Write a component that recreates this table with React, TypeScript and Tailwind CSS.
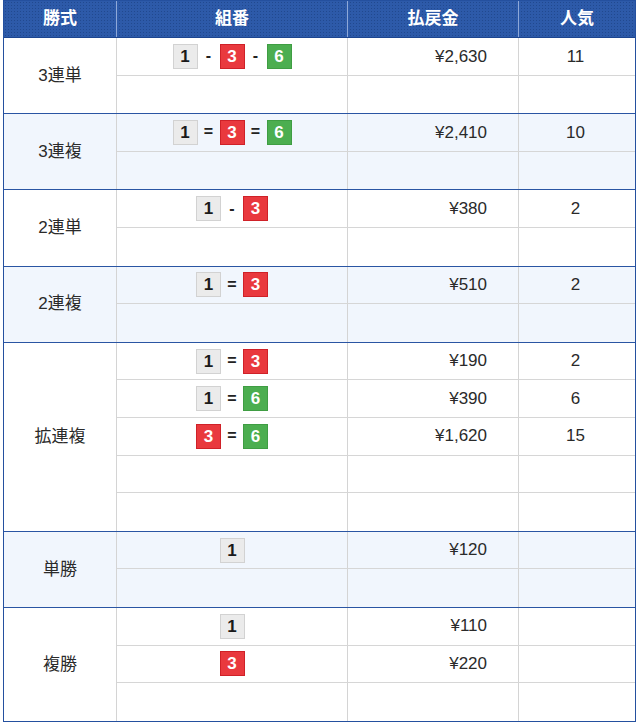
const font = { fontFamily: '"Liberation Sans", "Noto Sans CJK JP", sans-serif' };

type Pick = { nums: number[]; sep: string; pay: string; pop: string };

const groups: { label: string; rows: number; picks: Pick[] }[] = [
  { label: "3連単", rows: 2, picks: [{ nums: [1, 3, 6], sep: "-", pay: "¥2,630", pop: "11" }] },
  { label: "3連複", rows: 2, picks: [{ nums: [1, 3, 6], sep: "=", pay: "¥2,410", pop: "10" }] },
  { label: "2連単", rows: 2, picks: [{ nums: [1, 3], sep: "-", pay: "¥380", pop: "2" }] },
  { label: "2連複", rows: 2, picks: [{ nums: [1, 3], sep: "=", pay: "¥510", pop: "2" }] },
  {
    label: "拡連複",
    rows: 5,
    picks: [
      { nums: [1, 3], sep: "=", pay: "¥190", pop: "2" },
      { nums: [1, 6], sep: "=", pay: "¥390", pop: "6" },
      { nums: [3, 6], sep: "=", pay: "¥1,620", pop: "15" },
    ],
  },
  { label: "単勝", rows: 2, picks: [{ nums: [1], sep: "", pay: "¥120", pop: "" }] },
  {
    label: "複勝",
    rows: 3,
    picks: [
      { nums: [1], sep: "", pay: "¥110", pop: "" },
      { nums: [3], sep: "", pay: "¥220", pop: "" },
    ],
  },
];

const boxStyles: Record<number, string> = {
  1: "bg-[#ebebeb] border-[#d2d2d2] text-[#1a1a1a]",
  3: "bg-[#e9393e] border-[#cf2128] text-white",
  6: "bg-[#4cae50] border-[#3f9d43] text-white",
};

function NumBox({ n }: { n: number }) {
  return (
    <span
      className={`w-[25px] h-[25px] border flex items-center justify-center text-[17px] font-bold leading-none ${boxStyles[n]}`}
    >
      {n}
    </span>
  );
}

function Combo({ nums, sep }: { nums: number[]; sep: string }) {
  return (
    <div className="flex items-center justify-center">
      {nums.map((n, i) => (
        <div key={i} className="flex items-center">
          {i > 0 && (
            <span className="w-[22px] text-center text-[16px] font-bold text-[#222] leading-none">{sep}</span>
          )}
          <NumBox n={n} />
        </div>
      ))}
    </div>
  );
}

export default function App() {
  return (
    <div className="bg-white w-[640px] h-[723px] pl-[3px]" style={font}>
      <div className="w-[633px] border border-[#24509f] border-b-[1.5px]">
        {/* header */}
        <div className="flex h-[37px] bg-[#2d5aa9] bg-[radial-gradient(#21498f_0.7px,transparent_0.9px)] bg-[length:3px_3px] border-b border-[#1d4690] text-white text-[17px] font-bold">
          <div className="w-[113px] flex items-center justify-center border-r border-[#8ea8d8]">勝式</div>
          <div className="w-[231px] flex items-center justify-center border-r border-[#8ea8d8]">組番</div>
          <div className="w-[171px] flex items-center justify-center border-r border-[#8ea8d8]">払戻金</div>
          <div className="flex-1 flex items-center justify-center">人気</div>
        </div>

        {groups.map((g, gi) => (
          <div
            key={gi}
            className={`flex ${gi % 2 === 1 ? "bg-[#f1f6fd]" : "bg-white"} ${
              gi < groups.length - 1 ? "border-b border-[#2a55a3]" : ""
            }`}
          >
            <div className="w-[113px] flex items-center justify-center border-r border-[#d4d4d4] text-[17px] text-[#2a2a2a]">
              {g.label}
            </div>
            <div className="flex-1 flex flex-col">
              {Array.from({ length: g.rows }).map((_, ri) => {
                const p = g.picks[ri];
                return (
                  <div
                    key={ri}
                    className={`flex h-[37.6px] text-[17px] text-[#2a2a2a] ${
                      ri < g.rows - 1 ? "border-b border-[#d6d6d6]" : ""
                    }`}
                  >
                    <div className="w-[231px] flex items-center justify-center border-r border-[#d4d4d4]">
                      {p && <Combo nums={p.nums} sep={p.sep} />}
                    </div>
                    <div className="w-[171px] flex items-center justify-end pr-[31px] border-r border-[#d4d4d4]">
                      {p?.pay}
                    </div>
                    <div className="flex-1 flex items-center justify-center pr-[3px]">{p?.pop}</div>
                  </div>
                );
              })}
            </div>
          </div>
        ))}
      </div>
    </div>
  );
}
